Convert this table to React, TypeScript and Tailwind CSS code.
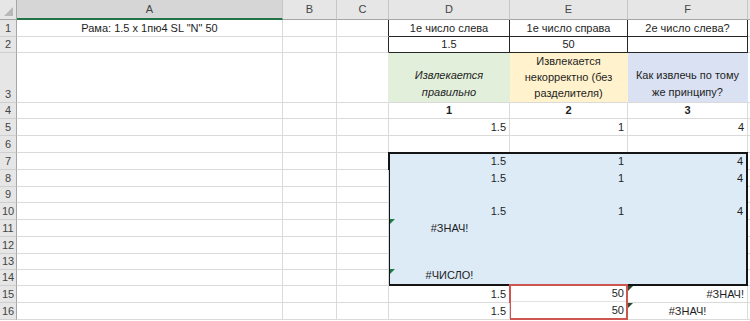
import type { ReactNode } from 'react';

// Column widths: row header, A..F, then the edge of G
const GRID_COLS = 'grid-cols-[17px_266px_54px_52px_121px_118px_120px_1fr]';
const GRID_ROWS =
  'grid-rows-[20px_17px_16px_50px_16px_17px_17px_17px_17px_16px_17px_17px_17px_16px_16px_17px_17px]';

const FONT = "font-['Liberation_Sans',Arial,sans-serif]";

type Align = 'left' | 'center' | 'right';

const alignClass: Record<Align, string> = {
  left: 'justify-start text-left',
  center: 'justify-center text-center',
  right: 'justify-end text-right',
};

function Cell({
  children,
  align = 'left',
  className = '',
}: {
  children?: ReactNode;
  align?: Align;
  className?: string;
}) {
  return (
    <div
      className={`flex items-end overflow-visible whitespace-nowrap px-[3px] pb-[1px] text-[11px] leading-[14px] text-[#1e1e1e] border-r border-b border-[#dadada] ${alignClass[align]} ${className}`}
    >
      {children}
    </div>
  );
}

function RowHead({ n }: { n: number }) {
  return (
    <div className="flex items-end justify-center bg-[#e6e6e6] border-r border-r-[#a6a6a6] border-b border-b-[#cfcfcf] pb-[1px] text-[11px] leading-[13px] text-[#444]">
      {n}
    </div>
  );
}

function ColHead({ label, active = false }: { label: string; active?: boolean }) {
  return (
    <div
      className={`flex items-center justify-center text-[11px] text-[#444] border-r border-[#c6c6c6] ${
        active ? 'bg-[#d6d6d6] border-b-2 border-b-[#217346]' : 'bg-[#e6e6e6] border-b border-b-[#a6a6a6]'
      }`}
    >
      {label}
    </div>
  );
}

// little green error flag in a cell's top-left corner
function ErrorFlag({ className = '' }: { className?: string }) {
  return (
    <span
      className={`absolute left-0 top-0 h-0 w-0 border-t-[5px] border-r-[5px] border-t-[#1e7b45] border-r-transparent ${className}`}
    />
  );
}

// D7:F14 filled block with the heavy outline
function BlueBlock() {
  const rows: [string, string, string][] = [
    ['1.5', '1', '4'],
    ['1.5', '1', '4'],
    ['', '', ''],
    ['1.5', '1', '4'],
    ['#ЗНАЧ!', '', ''],
    ['', '', ''],
    ['', '', ''],
    ['#ЧИСЛО!', '', ''],
  ];
  return (
    <div className="col-span-3 row-span-8 border-2 border-[#141414] bg-[#ddebf7] -mt-[1px] -ml-[1px]">
      <div className="grid h-full grid-cols-[119px_118px_1fr] grid-rows-[15px_17px_16px_17px_17px_17px_16px_14px]">
        {rows.map((r, i) =>
          r.map((v, j) => {
            const isErr = v.startsWith('#');
            return (
              <div
                key={`${i}-${j}`}
                className={`relative flex items-end whitespace-nowrap px-[3px] pb-[1px] text-[11px] leading-[14px] text-[#1e1e1e] ${
                  isErr ? 'justify-center' : 'justify-end'
                }`}
              >
                {isErr && <ErrorFlag className="-left-[2px]" />}
                {v}
              </div>
            );
          })
        )}
      </div>
    </div>
  );
}

// E15:E16 outlined in red
function RedBox() {
  return (
    <div className="row-span-2 -mt-[2px] -ml-[1px] border-2 border-[#cd5750] bg-white">
      <div className="grid h-full grid-rows-2">
        <div className="flex items-end justify-end border-b border-[#e2e2e2] px-[2px] pb-[1px] text-[11px] leading-[14px] text-[#1e1e1e]">
          50
        </div>
        <div className="flex items-end justify-end px-[2px] pb-[1px] text-[11px] leading-[14px] text-[#1e1e1e]">
          50
        </div>
      </div>
    </div>
  );
}

export default function App() {
  const dark = 'border-r-[#262626] border-b-[#262626]';
  const empty = (k: string, extra = '') => <Cell key={k} className={extra} />;

  return (
    <div className={`h-[321px] w-[750px] overflow-hidden bg-white ${FONT}`}>
      <div className={`grid ${GRID_COLS} ${GRID_ROWS}`}>
        {/* column headers */}
        <div className="relative bg-[#e6e6e6] border-r border-r-[#a6a6a6] border-b border-b-[#a6a6a6]">
          <span className="absolute bottom-[3px] right-[3px] h-0 w-0 border-b-[9px] border-l-[9px] border-b-[#b8b8b8] border-l-transparent" />
        </div>
        <ColHead label="A" active />
        <ColHead label="B" />
        <ColHead label="C" />
        <ColHead label="D" />
        <ColHead label="E" />
        <ColHead label="F" />
        <ColHead label="" />

        {/* 1 */}
        <RowHead n={1} />
        <Cell align="center">Рама: 1.5 х 1пю4 SL "N" 50</Cell>
        {empty('1b')}
        {empty('1c', 'border-r-[#262626]')}
        <Cell align="center" className={dark}>1е число слева</Cell>
        <Cell align="center" className={dark}>1е число справа</Cell>
        <Cell align="center" className={dark}>2е число слева?</Cell>
        {empty('1g')}

        {/* 2 */}
        <RowHead n={2} />
        {empty('2a')}
        {empty('2b')}
        {empty('2c', 'border-r-[#262626]')}
        <Cell align="center" className={dark}>1.5</Cell>
        <Cell align="center" className={dark}>50</Cell>
        <Cell align="center" className={dark}></Cell>
        {empty('2g')}

        {/* 3 */}
        <RowHead n={3} />
        {empty('3a')}
        {empty('3b')}
        {empty('3c', 'border-r-[#e2efda]')}
        <Cell align="center" className="items-center whitespace-normal bg-[#e2efda] border-r-[#e2efda] italic leading-[17px]">
          Извлекается
          <br />
          правильно
        </Cell>
        <Cell align="center" className="items-center whitespace-normal bg-[#fff2cc] border-r-[#fff2cc] leading-[16px]">
          Извлекается
          <br />
          некорректно (без
          <br />
          разделителя)
        </Cell>
        <Cell align="center" className="items-center whitespace-normal bg-[#d9e1f2] border-r-[#d9e1f2] leading-[17px]">
          Как извлечь по тому
          <br />
          же принципу?
        </Cell>
        {empty('3g')}

        {/* 4 */}
        <RowHead n={4} />
        {empty('4a')}
        {empty('4b')}
        {empty('4c')}
        <Cell align="center" className="font-bold">1</Cell>
        <Cell align="center" className="font-bold">2</Cell>
        <Cell align="center" className="font-bold">3</Cell>
        {empty('4g')}

        {/* 5 */}
        <RowHead n={5} />
        {empty('5a')}
        {empty('5b')}
        {empty('5c')}
        <Cell align="right">1.5</Cell>
        <Cell align="right">1</Cell>
        <Cell align="right">4</Cell>
        {empty('5g')}

        {/* 6 */}
        <RowHead n={6} />
        {empty('6a')}
        {empty('6b')}
        {empty('6c')}
        {empty('6d')}
        {empty('6e')}
        {empty('6f')}
        {empty('6g')}

        {/* 7..14 — the block spans D:F, the rest auto-flows around it */}
        <RowHead n={7} />
        {empty('7a')}
        {empty('7b')}
        {empty('7c')}
        <BlueBlock />
        {empty('7g')}
        {[8, 9, 10, 11, 12, 13, 14].map((n) => [
          <RowHead key={`h${n}`} n={n} />,
          empty(`${n}a`),
          empty(`${n}b`),
          empty(`${n}c`),
          empty(`${n}g`),
        ])}

        {/* 15 */}
        <RowHead n={15} />
        {empty('15a')}
        {empty('15b')}
        {empty('15c')}
        <Cell align="right">1.5</Cell>
        <RedBox />
        <Cell align="right" className="relative">
          <ErrorFlag className="border-t-[#2d4a2f]" />
          #ЗНАЧ!
        </Cell>
        {empty('15g')}

        {/* 16 */}
        <RowHead n={16} />
        {empty('16a')}
        {empty('16b')}
        {empty('16c')}
        <Cell align="right">1.5</Cell>
        <Cell align="center" className="relative">
          <ErrorFlag className="border-t-[#2d4a2f]" />
          #ЗНАЧ!
        </Cell>
        {empty('16g')}
      </div>
    </div>
  );
}
